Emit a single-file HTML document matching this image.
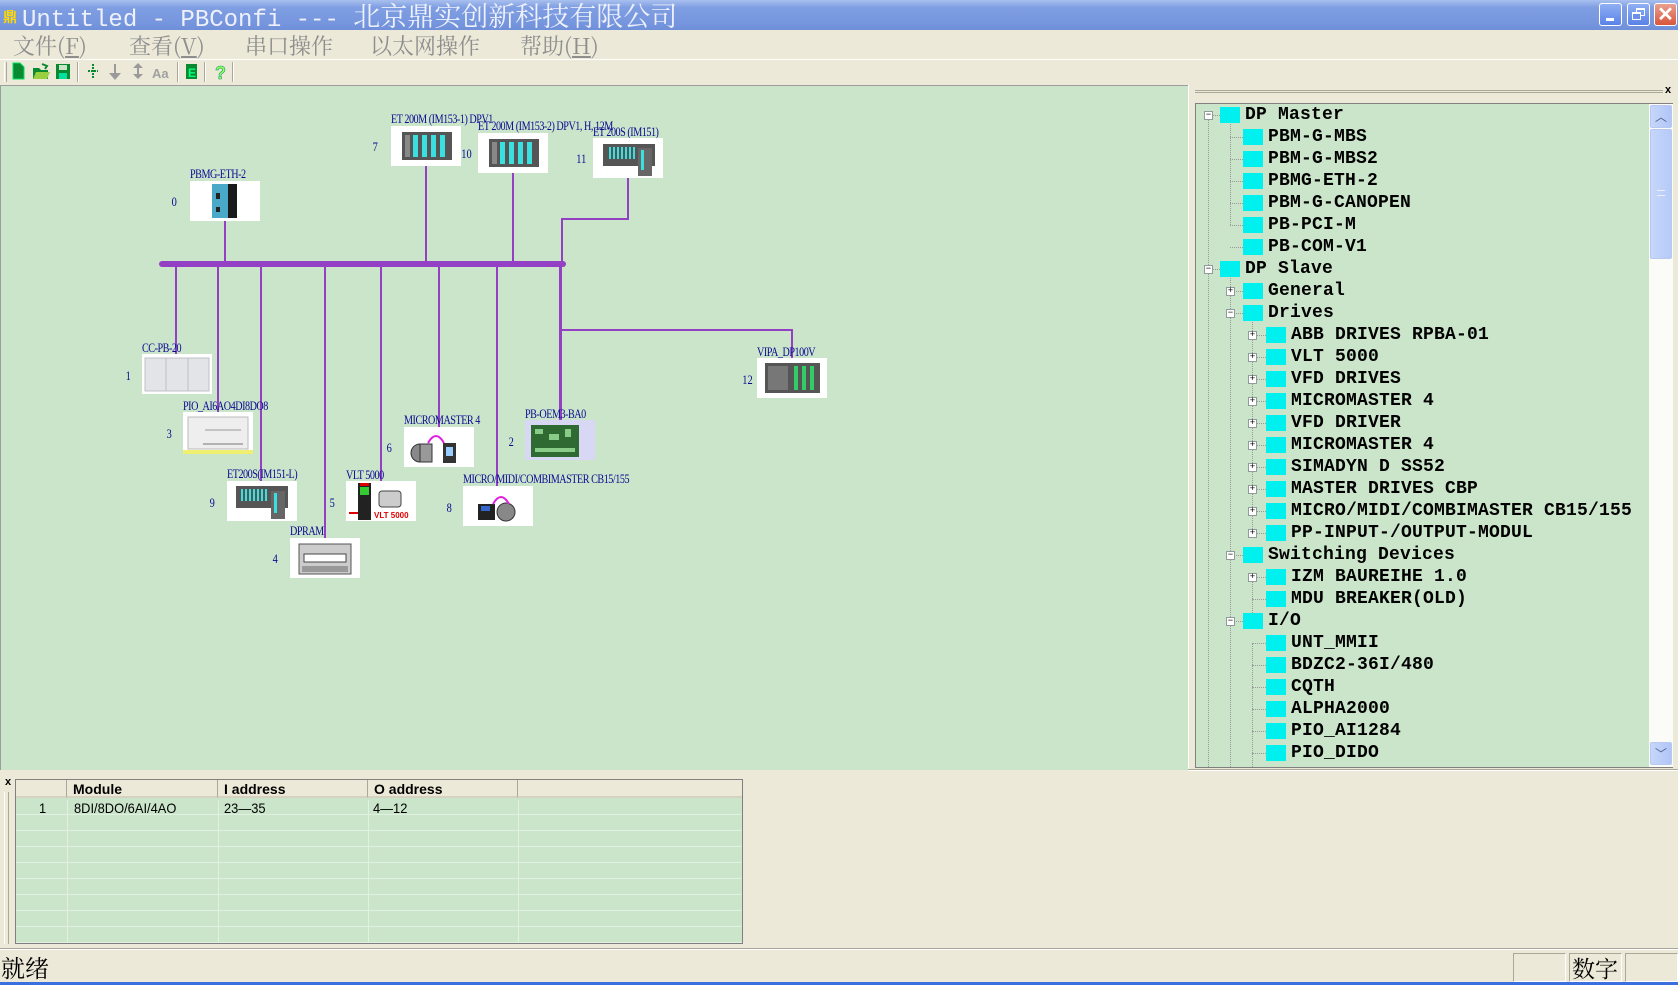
<!DOCTYPE html>
<html><head><meta charset="utf-8">
<style>
*{margin:0;padding:0;box-sizing:border-box}
body{width:1678px;height:985px;overflow:hidden;background:#ece9d8;position:relative;font-family:"Liberation Sans","Noto Sans CJK SC",sans-serif}
.a{position:absolute}
#title{left:0;top:0;width:1678px;height:30px;background:linear-gradient(#a9c0ee,#7f9ee2 25%,#7595de 80%,#6f8fd8)}
#title .t{left:22px;top:0;height:30px;line-height:30px;color:#eef1fb;white-space:nowrap}
.tb{top:3px;width:23px;height:23px;border:1px solid #fff;border-radius:3px;background:linear-gradient(#8fb0f4,#5a82e6)}
#menu span{position:absolute;top:31px;font-family:"Noto Serif CJK SC","Liberation Serif",serif;font-size:22px;color:#8e8e8e;line-height:30px}
.sep{top:62px;width:2px;height:20px;border-left:1px solid #aca899;border-right:1px solid #fff}
#diag{left:0;top:85px;width:1188px;height:685px;background:#cbe5cb;border-top:1px solid #9d9d9d;border-left:1px solid #9d9d9d}
.v{position:absolute;width:2px;background:#9440c4}
.h{position:absolute;height:2px;background:#9440c4}
.box{position:absolute;width:70px;height:40px;background:#fff}
.lb{position:absolute;font-family:"Liberation Serif",serif;font-size:13px;color:#0a0a90;white-space:nowrap;transform:scaleX(.78);transform-origin:0 0;letter-spacing:-.6px;line-height:13px}
.nm{position:absolute;font-family:"Liberation Serif",serif;font-size:13px;color:#0a0a90;transform:scaleX(.8);line-height:13px}
#tree{left:1195px;top:103px;width:478px;height:665px;background:#cbe5cb;border:1px solid #808080;border-right:none;overflow:hidden}
.row{position:absolute;height:22px;line-height:22px;font-family:"Liberation Mono",monospace;font-weight:bold;font-size:18px;color:#000;white-space:nowrap;letter-spacing:.2px}
.ic{position:absolute;width:20px;height:16px;background:#00f0f0}
.ex{position:absolute;width:9px;height:9px;border:1px solid #919b9c;background:#fff;font-size:9px;line-height:7px;text-align:center;color:#000;font-family:"Liberation Mono",monospace}
.dot{position:absolute;border-left:1px dotted #999}
.doth{position:absolute;border-top:1px dotted #999;height:0}
#grid{left:15px;top:779px;width:728px;height:165px;background:#cbe5cb;border:1px solid #808080;overflow:hidden}
.gh{position:absolute;top:0;height:18px;background:#ece9d8;border-right:1px solid #aca899;border-bottom:2px solid #d6d2c2;font-family:"Liberation Sans Narrow","Liberation Sans",sans-serif;font-size:14px;line-height:18px;padding-left:6px;color:#000}
.gt{position:absolute;font-family:"Liberation Sans Narrow","Liberation Sans",sans-serif;font-size:14px;line-height:16px;color:#000;transform:scaleX(.92);transform-origin:0 0}
</style></head><body>

<div id="title" class="a">
  <div class="a" style="left:3px;top:7px;width:14px;height:16px;color:#ffd800;font-size:14px;font-weight:bold;font-family:'Noto Sans CJK SC'">鼎</div>
  <div class="a t"><span style="font-family:'Liberation Mono',monospace;font-size:24px">Untitled - PBConfi --- </span><span style="font-family:'Noto Serif CJK SC',serif;font-size:27px;letter-spacing:0px">北京鼎实创新科技有限公司</span></div>
  <div class="a tb" style="left:1599px"><div class="a" style="left:6px;top:14px;width:8px;height:3px;background:#fff"></div></div>
  <div class="a tb" style="left:1627px"><div class="a" style="left:8px;top:4px;width:9px;height:8px;border:1px solid #fff;border-top-width:2px"></div><div class="a" style="left:4px;top:8px;width:9px;height:8px;border:1px solid #fff;border-top-width:2px;background:#6c90ea"></div></div>
  <div class="a tb" style="left:1654px;background:linear-gradient(#e8a090,#d8563a)"><div class="a" style="left:0;top:-2px;width:21px;text-align:center;color:#fff;font-size:20px;font-weight:bold">✕</div></div>
</div>

<div id="menu">
  <span style="left:13px">文件(<u>F</u>)</span>
  <span style="left:129px">查看(<u>V</u>)</span>
  <span style="left:245px">串口操作</span>
  <span style="left:370px">以太网操作</span>
  <span style="left:520px">帮助(<u>H</u>)</span>
</div>
<div class="a" style="left:0;top:59px;width:1678px;height:1px;background:#fff"></div>
<!-- toolbar -->
<div class="a" style="left:4px;top:62px;width:3px;height:20px;border-left:1px solid #fff;border-right:1px solid #aca899"></div>
<svg class="a" style="left:0;top:58px" width="240" height="28">
 <path d="M13 5h7l4 4v12H13z" fill="#0a8a30" stroke="#00e060" stroke-width="1"/>
 <path d="M33 10h6l2 2h7v9H33z" fill="#0a8a30"/><path d="M36 14h14l-3 7H33z" fill="#9ad040"/><path d="M42 6l5 2-2 3" stroke="#0a8a30" fill="none" stroke-width="2"/>
 <rect x="56" y="6" width="14" height="15" fill="#0a8a30"/><rect x="59" y="7" width="8" height="5" fill="#cbe5cb"/><rect x="59" y="15" width="8" height="6" fill="#00e0a0"/>
 <path d="M93 6v14M88 13h10" stroke="#0a8a30" stroke-width="2" stroke-dasharray="2 1"/>
 <path d="M114 6v9h-5l6 7 6-7h-5V6z" fill="#9a9a9a"/>
 <path d="M138 5l-5 5h4v6h-4l5 5 5-5h-4v-6h4z" fill="#9a9a9a"/>
 <text x="152" y="20" font-family="Liberation Sans" font-weight="bold" font-size="13" fill="#a0a0a0">Aa</text>
 <rect x="186" y="6" width="11" height="15" fill="#0a8a30"/><text x="188" y="19" font-family="Liberation Sans" font-weight="bold" font-size="12" fill="#00ff80">E</text>
 <text x="215" y="21" font-family="Liberation Sans" font-weight="bold" font-size="18" fill="#a0ff60" stroke="#00a060" stroke-width=".6">?</text>
</svg>
<div class="a sep" style="left:77px"></div><div class="a sep" style="left:177px"></div><div class="a sep" style="left:204px"></div><div class="a sep" style="left:232px"></div>

<!-- diagram -->
<div id="diag" class="a"></div>
<div class="a" style="left:0;top:0">
 <!-- bus -->
 <div class="a" style="left:159px;top:261px;width:407px;height:6px;background:#9440c4;border-radius:3px"></div>
 <!-- lines above -->
 <div class="v" style="left:224px;top:221px;height:42px"></div>
 <div class="v" style="left:425px;top:166px;height:97px"></div>
 <div class="v" style="left:512px;top:173px;height:90px"></div>
 <div class="v" style="left:627px;top:178px;height:42px"></div>
 <div class="h" style="left:561px;top:218px;width:68px"></div>
 <div class="v" style="left:561px;top:218px;height:45px"></div>
 <!-- lines below -->
 <div class="v" style="left:175px;top:264px;height:90px"></div>
 <div class="v" style="left:217px;top:264px;height:148px"></div>
 <div class="v" style="left:260px;top:264px;height:217px"></div>
 <div class="v" style="left:324px;top:264px;height:274px"></div>
 <div class="v" style="left:380px;top:264px;height:217px"></div>
 <div class="v" style="left:438px;top:264px;height:163px"></div>
 <div class="v" style="left:496px;top:264px;height:222px"></div>
 <div class="v" style="left:559px;top:264px;height:156px;width:3px"></div>
 <div class="h" style="left:561px;top:329px;width:232px"></div>
 <div class="v" style="left:791px;top:329px;height:29px"></div>

 <!-- PBMG -->
 <div class="lb" style="left:190px;top:167px">PBMG-ETH-2</div><div class="nm" style="left:171px;top:195px">0</div>
 <div class="box" style="left:190px;top:181px"><svg width="70" height="40"><rect x="22" y="3" width="16" height="34" fill="#4aa8c8"/><rect x="38" y="3" width="9" height="34" fill="#1a1a1a"/><rect x="26" y="12" width="4" height="6" fill="#222"/><rect x="26" y="26" width="4" height="5" fill="#222"/></svg></div>
 <!-- ET200M 1 -->
 <div class="lb" style="left:391px;top:112px">ET 200M (IM153-1) DPV1</div><div class="nm" style="left:372px;top:140px">7</div>
 <div class="box" style="left:391px;top:126px"><svg width="70" height="40"><rect x="11" y="6" width="50" height="28" fill="#555"/><rect x="14" y="9" width="5" height="22" fill="#888"/><g fill="#3ae0e0"><rect x="22" y="9" width="5" height="22"/><rect x="31" y="9" width="5" height="22"/><rect x="40" y="9" width="5" height="22"/><rect x="49" y="9" width="5" height="22"/></g></svg></div>
 <!-- ET200M 2 -->
 <div class="lb" style="left:478px;top:119px">ET 200M (IM153-2) DPV1, H, 12M</div><div class="nm" style="left:460px;top:147px">10</div>
 <div class="box" style="left:478px;top:133px"><svg width="70" height="40"><rect x="11" y="6" width="50" height="28" fill="#555"/><rect x="14" y="9" width="5" height="22" fill="#888"/><g fill="#3ae0e0"><rect x="22" y="9" width="5" height="22"/><rect x="31" y="9" width="5" height="22"/><rect x="40" y="9" width="5" height="22"/><rect x="49" y="9" width="5" height="22"/></g></svg></div>
 <!-- ET200S -->
 <div class="lb" style="left:593px;top:125px">ET 200S (IM151)</div><div class="nm" style="left:575px;top:152px">11</div>
 <div class="box" style="left:593px;top:138px"><svg width="70" height="40"><rect x="10" y="6" width="52" height="22" fill="#555"/><g fill="#3ae0e0"><rect x="16" y="9" width="2" height="12"/><rect x="20" y="9" width="2" height="12"/><rect x="24" y="9" width="2" height="12"/><rect x="28" y="9" width="2" height="12"/><rect x="32" y="9" width="2" height="12"/><rect x="36" y="9" width="2" height="12"/><rect x="40" y="9" width="2" height="12"/></g><rect x="45" y="10" width="14" height="28" fill="#666"/><rect x="48" y="12" width="3" height="20" fill="#3ae0e0"/></svg></div>
 <!-- CC-PB-20 -->
 <div class="lb" style="left:142px;top:341px">CC-PB-20</div><div class="nm" style="left:125px;top:369px">1</div>
 <div class="box" style="left:142px;top:354px"><svg width="70" height="40"><rect x="3" y="4" width="64" height="33" fill="#e2e4e8" stroke="#c0c0c8"/><line x1="24" y1="4" x2="24" y2="37" stroke="#c0c0c8"/><line x1="46" y1="4" x2="46" y2="37" stroke="#c0c0c8"/></svg></div>
 <!-- PIO -->
 <div class="lb" style="left:183px;top:399px">PIO_AI6AO4DI8DO8</div><div class="nm" style="left:166px;top:427px">3</div>
 <div class="box" style="left:183px;top:412px"><svg width="70" height="42"><rect x="5" y="5" width="60" height="32" fill="#eee" stroke="#bbb"/><line x1="22" y1="18" x2="58" y2="18" stroke="#999"/><line x1="20" y1="32" x2="60" y2="32" stroke="#777"/><rect x="0" y="38" width="70" height="4" fill="#f0f070"/></svg></div>
 <!-- ET200S L -->
 <div class="lb" style="left:227px;top:467px">ET200S(IM151-L)</div><div class="nm" style="left:209px;top:496px">9</div>
 <div class="box" style="left:227px;top:481px"><svg width="70" height="40"><rect x="9" y="5" width="52" height="22" fill="#555"/><g fill="#3ae0e0"><rect x="14" y="8" width="2" height="12"/><rect x="18" y="8" width="2" height="12"/><rect x="22" y="8" width="2" height="12"/><rect x="26" y="8" width="2" height="12"/><rect x="30" y="8" width="2" height="12"/><rect x="34" y="8" width="2" height="12"/><rect x="38" y="8" width="2" height="12"/></g><rect x="44" y="10" width="14" height="28" fill="#666"/><rect x="47" y="12" width="3" height="20" fill="#3ae0e0"/></svg></div>
 <!-- DPRAM -->
 <div class="lb" style="left:290px;top:524px">DPRAM</div><div class="nm" style="left:272px;top:552px">4</div>
 <div class="box" style="left:290px;top:538px"><svg width="70" height="40"><rect x="9" y="6" width="52" height="30" fill="#ccc" stroke="#555"/><rect x="14" y="16" width="42" height="8" fill="#fff" stroke="#444"/><rect x="12" y="28" width="46" height="6" fill="#999"/></svg></div>
 <!-- VLT -->
 <div class="lb" style="left:346px;top:468px">VLT 5000</div><div class="nm" style="left:329px;top:496px">5</div>
 <div class="box" style="left:346px;top:481px"><svg width="70" height="40"><rect x="12" y="2" width="13" height="37" fill="#222"/><rect x="14" y="6" width="9" height="8" fill="#3c3"/><rect x="14" y="2" width="9" height="3" fill="#d00"/><rect x="33" y="10" width="22" height="16" rx="3" fill="#ccc" stroke="#444"/><line x1="3" y1="32" x2="12" y2="32" stroke="#d00" stroke-width="2"/><text x="28" y="37" font-family="Liberation Sans" font-weight="bold" font-size="8" fill="#d00">VLT 5000</text></svg></div>
 <!-- MICROMASTER 4 -->
 <div class="lb" style="left:404px;top:413px">MICROMASTER 4</div><div class="nm" style="left:386px;top:441px">6</div>
 <div class="box" style="left:404px;top:427px"><svg width="70" height="40"><circle cx="16" cy="26" r="9" fill="#888" stroke="#333"/><rect x="16" y="17" width="12" height="18" fill="#999" stroke="#333"/><path d="M24 16q8-14 16 0" stroke="#e020e0" fill="none" stroke-width="2"/><rect x="39" y="16" width="13" height="20" fill="#333"/><rect x="42" y="20" width="7" height="9" fill="#9cf"/></svg></div>
 <!-- PB-OEM3 -->
 <div class="lb" style="left:525px;top:407px">PB-OEM3-BA0</div><div class="nm" style="left:508px;top:435px">2</div>
 <div class="box" style="left:525px;top:420px"><svg width="70" height="40"><rect x="0" y="0" width="70" height="40" fill="#d8d8f4"/><rect x="6" y="5" width="48" height="32" fill="#2e6a32"/><g fill="#8c8"><rect x="10" y="9" width="8" height="5"/><rect x="24" y="14" width="10" height="6"/><rect x="40" y="9" width="6" height="8"/><rect x="10" y="28" width="40" height="4"/></g></svg></div>
 <!-- MICRO/MIDI -->
 <div class="lb" style="left:463px;top:472px">MICRO/MIDI/COMBIMASTER CB15/155</div><div class="nm" style="left:446px;top:501px">8</div>
 <div class="box" style="left:463px;top:486px"><svg width="70" height="40"><rect x="15" y="18" width="17" height="16" fill="#222"/><rect x="18" y="20" width="9" height="5" fill="#36c"/><circle cx="43" cy="26" r="9" fill="#888" stroke="#333"/><path d="M30 18q8-14 16 0" stroke="#e020e0" fill="none" stroke-width="2"/></svg></div>
 <!-- VIPA -->
 <div class="lb" style="left:757px;top:345px">VIPA_DP100V</div><div class="nm" style="left:741px;top:373px">12</div>
 <div class="box" style="left:757px;top:358px"><svg width="70" height="40"><rect x="8" y="5" width="55" height="30" fill="#555"/><rect x="11" y="8" width="20" height="24" fill="#777"/><g fill="#3c6"><rect x="37" y="8" width="4" height="24"/><rect x="45" y="8" width="4" height="24"/><rect x="53" y="8" width="4" height="24"/></g></svg></div>
</div>

<!-- right panel -->
<div class="a" style="left:1188px;top:85px;width:3px;height:685px;background:#ece9d8;border-left:1px solid #fff"></div>
<div class="a" style="left:1195px;top:90px;width:468px;height:3px;border-top:1px solid #aca899;border-bottom:1px solid #aca899"></div>
<div class="a" style="left:1665px;top:84px;font-size:11px;font-weight:bold;color:#000">x</div>
<div id="tree" class="a">
 <div id="rows"></div>
 <!-- scrollbar -->
 <div class="a" style="left:453px;top:0;width:24px;height:665px;background:#fbfbf8"></div>
 <div class="a" style="left:454px;top:1px;width:22px;height:23px;border:1px solid #b8c8f0;border-radius:2px;background:linear-gradient(90deg,#c6d6fb,#b0c6f6);color:#4d6185;font-size:12px;text-align:center;line-height:22px">︿</div>
 <div class="a" style="left:454px;top:25px;width:22px;height:130px;border:1px solid #b8c8f0;border-radius:2px;background:linear-gradient(90deg,#c6d6fb,#b6cbf8);"><div class="a" style="left:6px;top:60px;width:8px;height:6px;border-top:1px solid #eef;border-bottom:1px solid #eef"></div></div>
 <div class="a" style="left:454px;top:638px;width:22px;height:23px;border:1px solid #b8c8f0;border-radius:2px;background:linear-gradient(90deg,#c6d6fb,#b0c6f6);color:#4d6185;font-size:12px;text-align:center;line-height:22px">﹀</div>
</div>
<div class="a" style="left:1188px;top:769px;width:490px;height:2px;border-top:1px solid #aca899;border-bottom:1px solid #fff"></div>

<!-- bottom grid -->
<div class="a" style="left:5px;top:776px;font-size:11px;font-weight:bold">x</div>
<div class="a" style="left:4px;top:792px;width:5px;height:152px;border-left:1px solid #fff;border-right:1px solid #aca899"></div>
<div id="grid" class="a">
 <div class="gh" style="left:0;width:51px"></div>
 <div class="gh" style="left:51px;width:151px;font-weight:bold">Module</div>
 <div class="gh" style="left:202px;width:150px;font-weight:bold">I address</div>
 <div class="gh" style="left:352px;width:150px;font-weight:bold">O address</div>
 <div class="gh" style="left:502px;width:230px;border-right:none"></div>
 <div id="glines"></div>
 <div class="gt" style="left:23px;top:20px">1</div>
 <div class="gt" style="left:58px;top:20px">8DI/8DO/6AI/4AO</div>
 <div class="gt" style="left:208px;top:20px">23—35</div>
 <div class="gt" style="left:357px;top:20px">4—12</div>
</div>

<!-- status bar -->
<div class="a" style="left:0;top:948px;width:1678px;height:1px;background:#aca899"></div>
<div class="a" style="left:0;top:949px;width:1678px;height:1px;background:#fff"></div>
<div class="a" style="left:1px;top:952px;font-family:'Noto Serif CJK SC',serif;font-size:24px;line-height:30px;color:#000">就绪</div>
<div class="a" style="left:1513px;top:953px;width:53px;height:29px;border:1px solid;border-color:#aca899 #fff #fff #aca899"></div>
<div class="a" style="left:1569px;top:953px;width:53px;height:29px;border:1px solid;border-color:#aca899 #fff #fff #aca899;font-family:'Noto Serif CJK SC',serif;font-size:23px;line-height:27px;padding-left:2px">数字</div>
<div class="a" style="left:1625px;top:953px;width:53px;height:29px;border:1px solid;border-color:#aca899 #fff #fff #aca899"></div>
<div class="a" style="left:0;top:982px;width:1678px;height:3px;background:#3b6fe0"></div>

<script>
var rows=[[0,'-','DP Master'],[1,'','PBM-G-MBS'],[1,'','PBM-G-MBS2'],[1,'','PBMG-ETH-2'],[1,'','PBM-G-CANOPEN'],[1,'','PB-PCI-M'],[1,'','PB-COM-V1'],
[0,'-','DP Slave'],[1,'+','General'],[1,'-','Drives'],[2,'+','ABB DRIVES RPBA-01'],[2,'+','VLT 5000'],[2,'+','VFD DRIVES'],[2,'+','MICROMASTER 4'],[2,'+','VFD DRIVER'],[2,'+','MICROMASTER 4'],[2,'+','SIMADYN D SS52'],[2,'+','MASTER DRIVES CBP'],[2,'+','MICRO/MIDI/COMBIMASTER CB15/155'],[2,'+','PP-INPUT-/OUTPUT-MODUL'],
[1,'-','Switching Devices'],[2,'+','IZM BAUREIHE 1.0'],[2,'','MDU BREAKER(OLD)'],[1,'-','I/O'],[2,'','UNT_MMII'],[2,'','BDZC2-36I/480'],[2,'','CQTH'],[2,'','ALPHA2000'],[2,'','PIO_AI1284'],[2,'','PIO_DIDO']];
var h='';var ox=1195,oy=103;
var exX=[1207,1229,1251],icX=[1219,1242,1265];
// vertical dotted lines
h+='<div class="dot" style="left:'+(1207-ox)+'px;top:'+(118-oy)+'px;height:650px"></div>';
h+='<div class="dot" style="left:'+(1229-ox)+'px;top:'+(118-oy)+'px;height:'+(224-118)+'px"></div>';
h+='<div class="dot" style="left:'+(1229-ox)+'px;top:'+(268-oy)+'px;height:600px"></div>';
h+='<div class="dot" style="left:'+(1251-ox)+'px;top:'+(312-oy)+'px;height:'+(532-312)+'px"></div>';
h+='<div class="dot" style="left:'+(1251-ox)+'px;top:'+(576-oy)+'px;height:'+(620-576)+'px"></div>';
h+='<div class="dot" style="left:'+(1251-ox)+'px;top:'+(642-oy)+'px;height:130px"></div>';
rows.forEach(function(r,i){var cy=114+22*i-oy;var l=r[0];
 var ex=exX[l]-ox;
 h+='<div class="doth" style="left:'+ex+'px;top:'+cy+'px;width:'+(icX[l]-exX[l])+'px"></div>';
 if(r[1])h+='<div class="ex" style="left:'+(ex-4)+'px;top:'+(cy-4)+'px">'+(r[1]=='+'?'+':'−')+'</div>';
 h+='<div class="ic" style="left:'+(icX[l]-ox)+'px;top:'+(cy-8)+'px"></div>';
 h+='<div class="row" style="left:'+(icX[l]+25-ox)+'px;top:'+(cy-11)+'px">'+r[2]+'</div>';
});
document.getElementById('rows').innerHTML=h;
var g='';for(var y=34;y<165;y+=16){g+='<div class="a" style="left:0;top:'+y+'px;width:728px;height:1px;background:#e2f0e2"></div>';}
[51,202,352,502].forEach(function(x){g+='<div class="a" style="left:'+x+'px;top:20px;width:1px;height:145px;background:#e2f0e2"></div>';});
document.getElementById('glines').innerHTML=g;
</script>
</body></html>
